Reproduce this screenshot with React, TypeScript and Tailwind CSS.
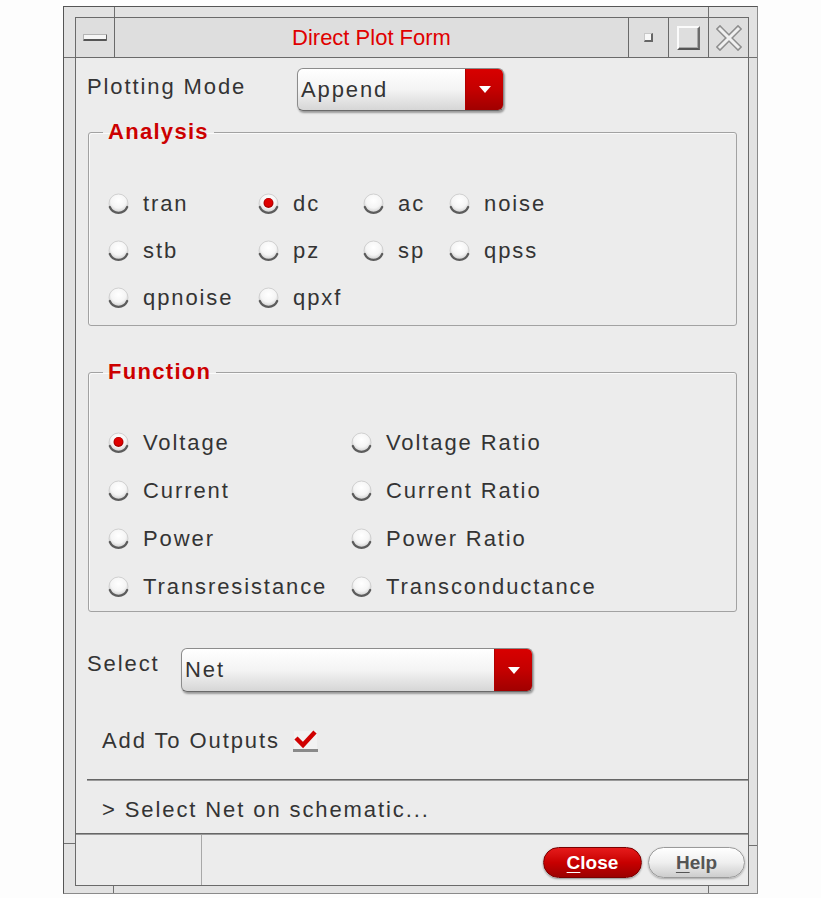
import React from "react";

const TXT = "text-[22px] leading-[26px] tracking-[1.9px] text-[#343434]";

function Radio({ checked }: { checked?: boolean }) {
  return (
    <svg width="23" height="22" viewBox="0 0 23 22" className="shrink-0">
      <defs>
        <radialGradient id="rbg" cx="50%" cy="35%" r="65%">
          <stop offset="0" stopColor="#ffffff" />
          <stop offset="0.6" stopColor="#f5f5f5" />
          <stop offset="1" stopColor="#c9c9c9" />
        </radialGradient>
      </defs>
      <circle cx="11.5" cy="10.5" r="9.5" fill="url(#rbg)" stroke="#d0d0d0" strokeWidth="1" />
      <path d="M2.8 14 A9.4 9.4 0 0 0 20.2 14" fill="none" stroke="#5c5c5c" strokeWidth="2.2" strokeLinecap="round" />
      {checked && (
        <>
          <circle cx="11.5" cy="10" r="5" fill="#a80000" />
          <circle cx="11.5" cy="9.6" r="4" fill="#e00000" />
        </>
      )}
    </svg>
  );
}

function Opt({ label, checked }: { label: string; checked?: boolean }) {
  return (
    <div className="flex items-center gap-[13px]">
      <Radio checked={checked} />
      <span className={TXT}>{label}</span>
    </div>
  );
}

function Combo({ value, w, h }: { value: string; w: string; h: string }) {
  return (
    <div
      className={`flex ${w} ${h} rounded-[6px] border border-[#8c8c8c] border-b-[#6a6a6a] bg-gradient-to-b from-white via-[#f4f4f4] to-[#d6d6d6] shadow-[1px_2px_2px_rgba(0,0,0,0.35)] overflow-hidden`}
    >
      <div className={`flex-1 flex items-center pl-[3px] ${TXT} text-[#333]`}>{value}</div>
      <div className="w-[38px] flex items-center justify-center bg-gradient-to-b from-[#d80000] via-[#c40000] to-[#a00000] border-l border-[#b00000]">
        <svg width="12" height="7" viewBox="0 0 12 7">
          <path d="M0 0 H12 L6 7 Z" fill="#ffffff" />
        </svg>
      </div>
    </div>
  );
}

function Legend({ children }: { children: React.ReactNode }) {
  return (
    <legend className="ml-[14px] px-[5px] text-[22px] leading-[26px] font-bold tracking-[1.3px] text-[#cc0000]">
      {children}
    </legend>
  );
}

export default function App() {
  return (
    <div className="w-[821px] h-[898px] bg-[#fdfdfd] overflow-hidden pl-[63px] pt-[6px] font-['Liberation_Sans',Arial,sans-serif]">
      <div className="relative w-[695px] h-[888px] bg-[#e2e2e2] border border-[#555] border-r-[#8a8a8a] border-b-[#8a8a8a] pl-[11px] pt-[10px] pr-[8px] pb-[7px]">
        {/* frame handle marks */}
        <div className="absolute left-[50px] top-0 w-px h-[10px] bg-[#707070]" />
        <div className="absolute left-[644px] top-0 w-px h-[10px] bg-[#707070]" />
        <div className="absolute left-0 top-[50px] w-[11px] h-px bg-[#707070]" />
        <div className="absolute right-0 top-[50px] w-[8px] h-px bg-[#707070]" />
        <div className="absolute left-0 top-[836px] w-[11px] h-px bg-[#707070]" />
        <div className="absolute right-0 top-[838px] w-[8px] h-px bg-[#707070]" />
        <div className="absolute left-[49px] bottom-0 w-px h-[7px] bg-[#707070]" />
        <div className="absolute left-[644px] bottom-0 w-px h-[7px] bg-[#707070]" />

        <div className="flex flex-col h-full border border-[#6a6a6a]">
          {/* title bar */}
          <div className="flex h-[40px] shrink-0 bg-[#dedede] border-b border-[#6a6a6a]">
            <div className="w-[39px] border-r border-[#6a6a6a] flex items-center justify-center">
              <div className="w-[24px] h-[7px] rounded-[1px] bg-[#f6f6f6] border border-[#b4b4b4] border-b-2 border-b-[#555] border-r-[#666]" />
            </div>
            <div className="flex-1 flex items-center justify-center text-[22px] leading-[26px] text-[#e00000]">
              Direct Plot Form
            </div>
            <div className="w-[40px] border-l border-[#6a6a6a] flex items-center justify-center">
              <div className="w-[9px] h-[9px] bg-[#f8f8f8] border border-[#c8c8c8] border-r-2 border-b-2 border-r-[#666] border-b-[#666]" />
            </div>
            <div className="w-[40px] border-l border-[#6a6a6a] flex items-center justify-center">
              <div className="w-[23px] h-[24px] border-2 border-t-[#fbfbfb] border-l-[#fbfbfb] border-r-[#6c6c6c] border-b-[#555] shadow-[inset_-1px_-1px_0_#a8a8a8]" />
            </div>
            <div className="w-[40px] border-l border-[#6a6a6a] flex items-center justify-center">
              <svg width="26" height="26" viewBox="0 0 26 26">
                <path d="M4 4 L22 22 M22 4 L4 22" stroke="#8e8e8e" strokeWidth="6" strokeLinecap="square" />
                <path d="M4 4 L22 22 M22 4 L4 22" stroke="#f0f0f0" strokeWidth="3" strokeLinecap="square" />
              </svg>
            </div>
          </div>

          {/* content */}
          <div className="flex-1 flex flex-col bg-[#ececec]">
            <div className="mt-[10px] flex items-center pl-[11px]">
              <div className={`w-[210px] pb-[6px] ${TXT}`}>Plotting Mode</div>
              <Combo value="Append" w="w-[207px]" h="h-[43px]" />
            </div>

            <fieldset className="mt-[8px] ml-[12px] mr-[11px] border border-[#a2a2a2] rounded-[3px] shadow-[inset_1px_1px_0_#fafafa]">
              <Legend>Analysis</Legend>
              <div className="pt-[35px] pb-[4px] pl-[18px] grid grid-cols-[150px_105px_86px_auto] auto-rows-[47px] items-center">
                <Opt label="tran" />
                <Opt label="dc" checked />
                <Opt label="ac" />
                <Opt label="noise" />
                <Opt label="stb" />
                <Opt label="pz" />
                <Opt label="sp" />
                <Opt label="qpss" />
                <Opt label="qpnoise" />
                <Opt label="qpxf" />
              </div>
            </fieldset>

            <fieldset className="mt-[33px] ml-[12px] mr-[11px] border border-[#a2a2a2] rounded-[3px] shadow-[inset_1px_1px_0_#fafafa]">
              <Legend>Function</Legend>
              <div className="pt-[34px] pl-[18px] grid grid-cols-[243px_auto] auto-rows-[48px] items-center">
                <Opt label="Voltage" checked />
                <Opt label="Voltage Ratio" />
                <Opt label="Current" />
                <Opt label="Current Ratio" />
                <Opt label="Power" />
                <Opt label="Power Ratio" />
                <Opt label="Transresistance" />
                <Opt label="Transconductance" />
              </div>
            </fieldset>

            <div className="mt-[36px] flex items-center pl-[11px]">
              <div className={`w-[94px] pb-[12px] ${TXT}`}>Select</div>
              <Combo value="Net" w="w-[352px]" h="h-[44px]" />
            </div>

            <div className="mt-[36px] flex items-center pl-[26px] gap-[13px]">
              <span className={TXT}>Add To Outputs</span>
              <svg width="25" height="22" viewBox="0 0 25 22">
                <rect x="1" y="1" width="23" height="19" fill="#f2f2f2" />
                <rect x="0" y="19" width="25" height="3" fill="#8a8a8a" />
                <path d="M3 8 L10 15 L22 2" fill="none" stroke="#d00000" strokeWidth="4.5" strokeLinejoin="miter" />
              </svg>
            </div>

            <div className="mt-[25px] ml-[11px] h-[2px] bg-[#666] border-b border-[#9a9a9a]" />

            <div className={`mt-[16px] pl-[26px] ${TXT}`}>&gt; Select Net on schematic...</div>

            <div className="mt-[10px] h-[2px] bg-[#666] border-b border-[#9a9a9a]" />

            <div className="flex-1 flex">
              <div className="w-[126px] border-r border-[#a8a8a8]" />
              <div className="flex-1 flex justify-end items-start pt-[12px] pr-[3px] gap-[6px]">
                <button className="w-[99px] h-[31px] rounded-full bg-gradient-to-b from-[#e61a1a] via-[#c80000] to-[#9c0000] border border-[#7a0000] text-white text-[19px] font-bold leading-none shadow-[0_1px_2px_rgba(0,0,0,0.4)]">
                  <span className="underline underline-offset-[3px]">C</span>lose
                </button>
                <button className="w-[97px] h-[31px] rounded-full bg-gradient-to-b from-white via-[#efefef] to-[#cdcdcd] border border-[#9a9a9a] text-[#555] text-[19px] font-bold leading-none shadow-[0_1px_2px_rgba(0,0,0,0.3)]">
                  <span className="underline underline-offset-[3px]">H</span>elp
                </button>
              </div>
            </div>
          </div>
        </div>
      </div>
    </div>
  );
}
